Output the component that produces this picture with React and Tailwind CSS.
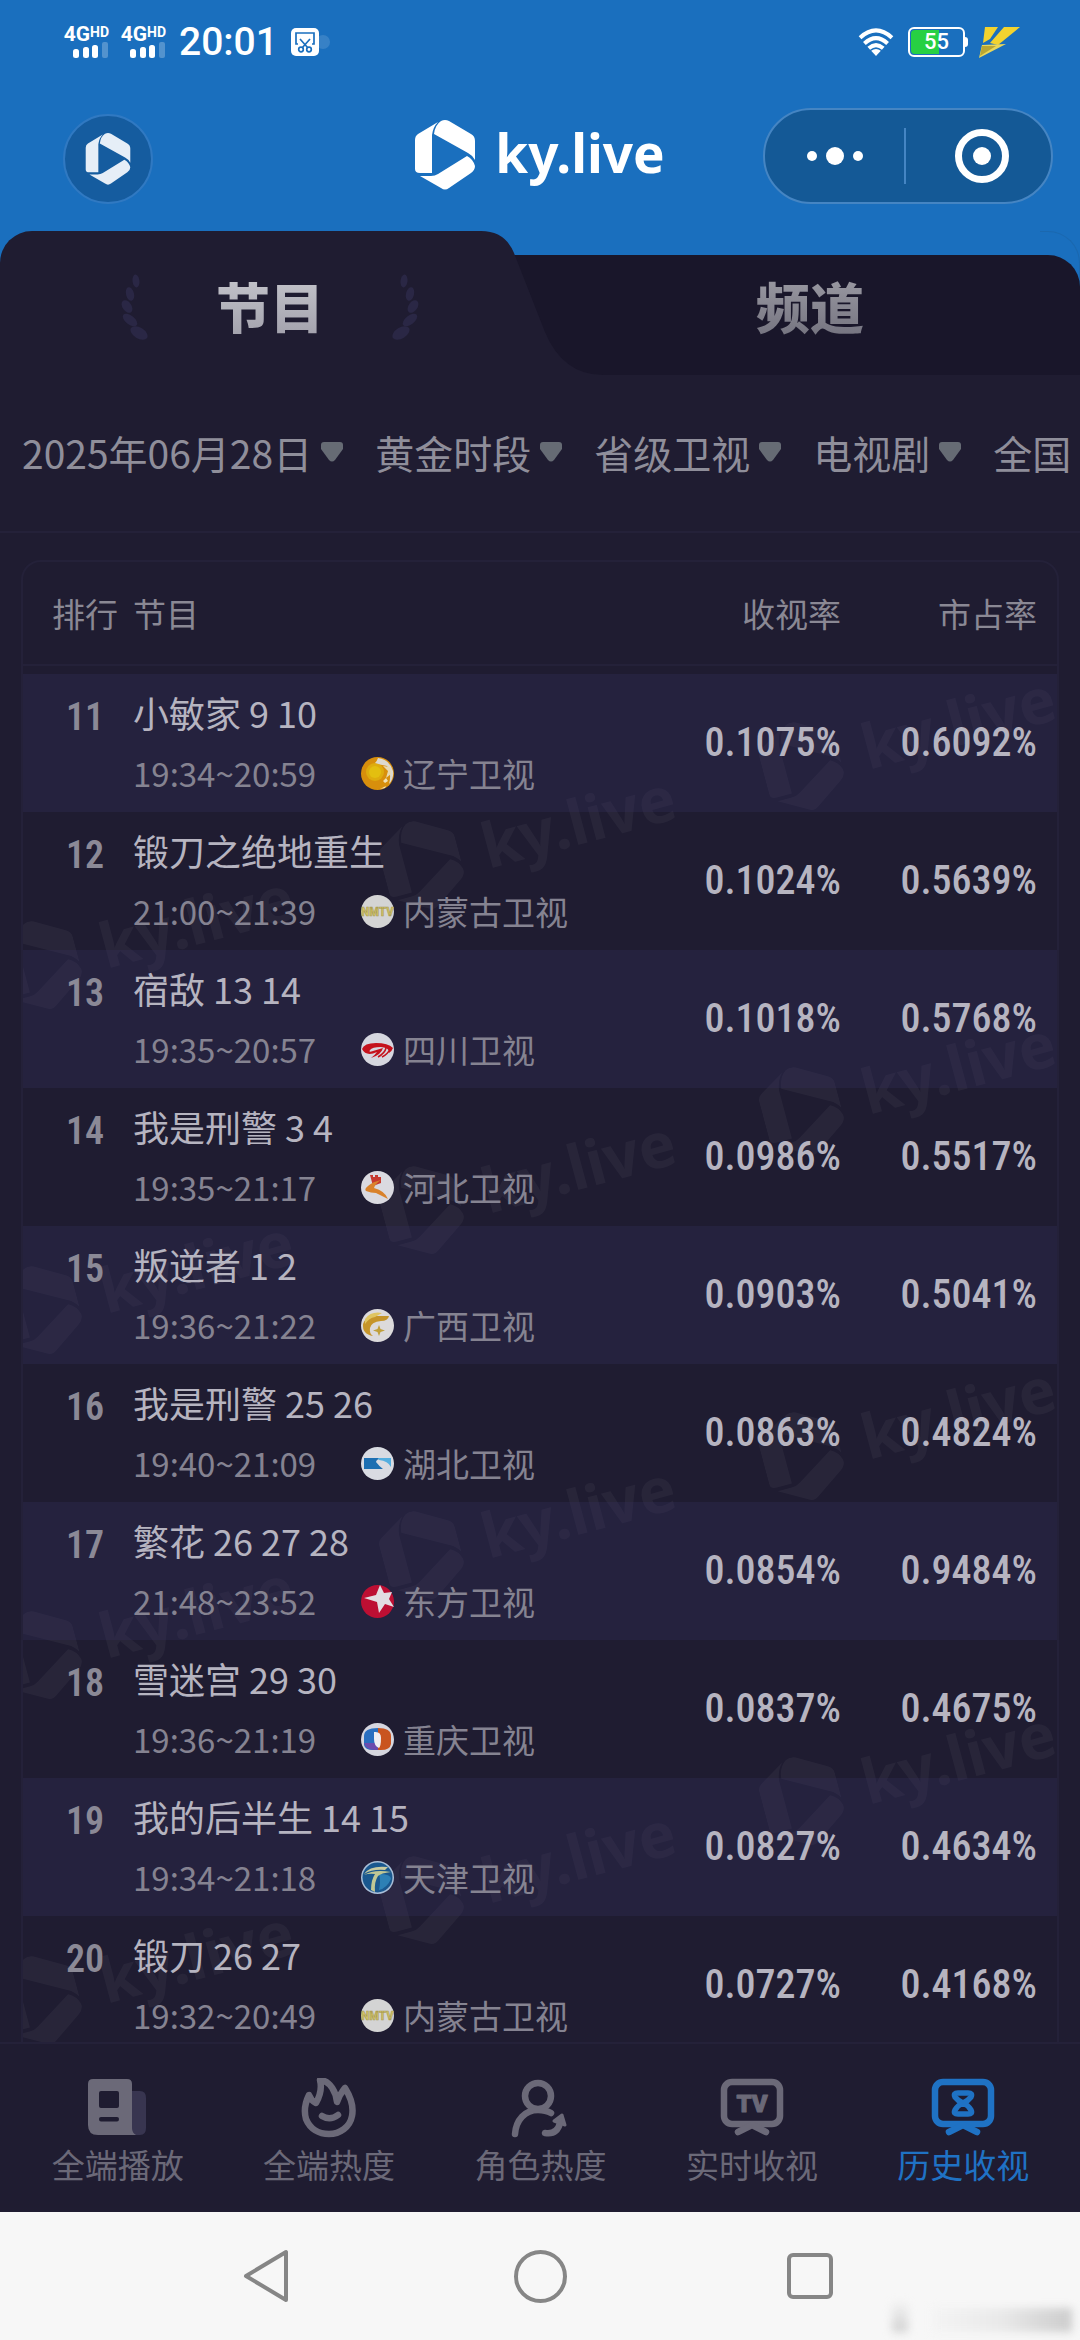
import React from "react";

const SANS = "font-['Noto_Sans_CJK_SC','Noto_Sans',sans-serif]";

const rows = [
  { rank: 11, title: "小敏家 9 10", time: "19:34~20:59", station: "辽宁卫视", logo: "liaoning", rating: "0.1075%", share: "0.6092%" },
  { rank: 12, title: "锻刀之绝地重生", time: "21:00~21:39", station: "内蒙古卫视", logo: "neimenggu", rating: "0.1024%", share: "0.5639%" },
  { rank: 13, title: "宿敌 13 14", time: "19:35~20:57", station: "四川卫视", logo: "sichuan", rating: "0.1018%", share: "0.5768%" },
  { rank: 14, title: "我是刑警 3 4", time: "19:35~21:17", station: "河北卫视", logo: "hebei", rating: "0.0986%", share: "0.5517%" },
  { rank: 15, title: "叛逆者 1 2", time: "19:36~21:22", station: "广西卫视", logo: "guangxi", rating: "0.0903%", share: "0.5041%" },
  { rank: 16, title: "我是刑警 25 26", time: "19:40~21:09", station: "湖北卫视", logo: "hubei", rating: "0.0863%", share: "0.4824%" },
  { rank: 17, title: "繁花 26 27 28", time: "21:48~23:52", station: "东方卫视", logo: "dongfang", rating: "0.0854%", share: "0.9484%" },
  { rank: 18, title: "雪迷宫 29 30", time: "19:36~21:19", station: "重庆卫视", logo: "chongqing", rating: "0.0837%", share: "0.4675%" },
  { rank: 19, title: "我的后半生 14 15", time: "19:34~21:18", station: "天津卫视", logo: "tianjin", rating: "0.0827%", share: "0.4634%" },
  { rank: 20, title: "锻刀 26 27", time: "19:32~20:49", station: "内蒙古卫视", logo: "neimenggu", rating: "0.0727%", share: "0.4168%" },
];

const filters = ["2025年06月28日", "黄金时段", "省级卫视", "电视剧", "全国"];

function BrandMark({ className }) {
  return (
    <svg viewBox="0 0 60 70" className={className} fill="currentColor" aria-hidden="true">
      <path d="M0 20Q0 16 3 14L23 2Q18 7 17 15V53H5Q0 53 0 49Z" />
      <path d="M26 1Q30 -1 34 1L56 14Q60 16 60 21V40Q57 35 53 33L19 14Q20 5 26 1Z" />
      <path d="M52 36Q58 39 60 46Q60 50 56 53L34 68Q30 71 26 68L5 56H16Q20 56 23 54Z" />
    </svg>
  );
}

function Signal() {
  return (
    <div className="flex w-12 flex-col items-end font-['Roboto',sans-serif] font-bold">
      <div className="flex items-start leading-4">
        <span className="text-[21px] leading-4">4G</span>
        <span className="text-[14px] leading-3">HD</span>
      </div>
      <svg viewBox="0 0 36 16" className="h-4 w-9" fill="currentColor" aria-hidden="true">
        <rect x="0" y="7" width="6" height="9" rx="2.5" />
        <rect x="10" y="5" width="6" height="11" rx="2.5" />
        <rect x="19" y="3" width="6" height="13" rx="2.5" />
        <rect x="29" y="0" width="6" height="16" rx="2" opacity=".25" />
      </svg>
    </div>
  );
}

function StatusBar() {
  return (
    <div className="flex h-21 items-center justify-between pr-[60px] pl-[61px] text-white">
      <div className="flex items-center gap-[9px]">
        <Signal />
        <Signal />
        <span className="pl-1 font-['Roboto',sans-serif] text-[39px] leading-8 font-medium">20:01</span>
        <svg viewBox="0 0 40 28" className="ml-1 h-7 w-10" aria-hidden="true">
          <circle cx="32" cy="14" r="7" fill="#fff" opacity=".13" />
          <rect width="28" height="28" rx="5" fill="#fff" />
          <g fill="none" stroke="#1a6fbe" strokeWidth="1.7">
            <path d="M7 16H5V5H23V16H21" />
            <path d="M9 11L17 20M19 11L11 20" />
            <circle cx="10" cy="21.500" r="2.300" />
            <circle cx="18" cy="21.500" r="2.300" />
          </g>
        </svg>
      </div>
      <div className="flex items-center gap-3.5">
        <svg viewBox="0 0 36 29" className="h-7 w-9" fill="none" stroke="#fff" strokeWidth="4.200" aria-hidden="true">
          <path d="M1.500 10Q18 -5 34.500 10" />
          <path d="M6 16Q18 5 30 16" />
          <path d="M10.500 21Q18 14.500 25.500 21" />
          <path d="M18 29L13 23.500Q18 20 23 23.500Z" fill="#fff" stroke="none" />
        </svg>
        <div className="flex items-center">
          <div className="relative flex h-[30px] w-[57px] items-center justify-center rounded-md border-2 border-white p-0.5">
            <div className="absolute inset-y-px left-px w-7 rounded-l bg-[#27d043]" />
            <span className="relative font-['Roboto',sans-serif] text-[22px] leading-6 font-medium">55</span>
          </div>
          <div className="h-2.5 w-[3px] rounded-r bg-white" />
        </div>
        <svg viewBox="0 0 42 32" className="-ml-1 h-8 w-[42px]" aria-hidden="true">
          <path d="M7 1H20L12 13L5 17Z" fill="#f3d32f" />
          <path d="M26 1H42L20 19L12 17Z" fill="#f3d32f" />
          <path d="M4 19L28 18L1 32Z" fill="#e9d75a" />
          <path d="M4 20L18 20L2 30Z" fill="#b9a633" />
        </svg>
      </div>
    </div>
  );
}

function AppHeader() {
  return (
    <header className="relative mt-6 mb-[27px] flex h-24 items-end justify-between pr-[27px] pl-[63px]">
      <button type="button" aria-label="首页" className="flex size-[90px] items-center justify-center rounded-full border-2 border-[#3079c2] bg-[#155c9f] text-[#e6eef7]">
        <BrandMark className="h-[52px] w-[46px]" />
      </button>
      <h1 className="absolute inset-x-0 top-3 flex items-center justify-center gap-5 text-white">
        <BrandMark className="h-[70px] w-[60px]" />
        <span className="pb-1 font-['Noto_Sans',sans-serif] text-[53px] leading-[60px] font-bold">ky.live</span>
      </h1>
      <div className="relative flex h-24 w-[290px] items-center rounded-full border-2 border-[#4585c3] bg-[#145996] text-white">
        <button type="button" aria-label="更多" className="flex h-full flex-1 items-center justify-center gap-[9px]">
          <i className="size-2.5 rounded-full bg-white" />
          <i className="size-[18px] rounded-full bg-white" />
          <i className="size-2.5 rounded-full bg-white" />
        </button>
        <span className="h-14 w-0.5 bg-[#4585c3]" />
        <button type="button" aria-label="关闭" className="flex h-full flex-1 items-center justify-center pl-1.5">
          <span className="flex size-[54px] items-center justify-center rounded-full border-7 border-white">
            <i className="size-[18px] rounded-full bg-white" />
          </span>
        </button>
      </div>
    </header>
  );
}

function Laurel({ className }) {
  return (
    <svg viewBox="0 0 30 70" className={className} fill="#2a2745" aria-hidden="true">
      <ellipse cx="17" cy="10" rx="3.500" ry="6.500" transform="rotate(-6 17 10)" />
      <ellipse cx="11" cy="23" rx="4" ry="7" transform="rotate(-14 11 23)" />
      <ellipse cx="8" cy="35.500" rx="4.500" ry="7" transform="rotate(-35 8 35.500)" />
      <ellipse cx="11" cy="49" rx="4.500" ry="8.500" transform="rotate(-52 11 49)" />
      <ellipse cx="20" cy="62" rx="5.500" ry="9.500" transform="rotate(-58 20 62)" />
    </svg>
  );
}

function Tabs() {
  return (
    <div role="tablist" className="relative grid h-36 grid-cols-2">
      <div className="absolute inset-x-0 top-0 bottom-0 overflow-hidden">
        <div className="ml-auto h-full w-10 rounded-tr-[32px] border-t border-r border-[#1b68af]" />
      </div>
      <div className="absolute inset-x-0 top-6 bottom-0 ml-[45%] rounded-tr-[32px] bg-[#19162a]" />
      <button type="button" role="tab" aria-selected="true" className="relative flex items-center justify-center pt-1.5">
        <span className="absolute inset-y-0 right-[60px] left-0 rounded-tl-[32px] bg-[#1f1c31]" />
        <svg viewBox="0 0 130 144" className="absolute top-0 left-full -ml-[61px] h-36 w-[130px]" aria-hidden="true">
          <path d="M0 0H2Q26 0 35 22L66 101Q84 144 124 144H0Z" fill="#1f1c31" />
        </svg>
        <span className="relative flex items-center gap-[67px]">
          <Laurel className="h-[70px] w-[30px]" />
          <span className="bg-linear-to-b from-[#c4c4cb] to-[#a3a2ad] bg-clip-text text-[54px] leading-[60px] font-black text-transparent">节目</span>
          <Laurel className="h-[70px] w-[30px] -scale-x-100" />
        </span>
      </button>
      <button type="button" role="tab" aria-selected="false" className="relative flex items-center justify-center pt-1.5">
        <span className="bg-linear-to-b from-[#9b9aa3] to-[#757480] bg-clip-text text-[54px] leading-[60px] font-black text-transparent">频道</span>
      </button>
    </div>
  );
}

function Filters() {
  return (
    <div className="flex h-[158px] items-center gap-8 overflow-hidden border-b-2 border-[#242139] pb-0.5 pl-[22px] text-[39px] leading-[60px] whitespace-nowrap text-[#8f8e9a]">
      {filters.map((label, i) => (
        <button key={label} type="button" className="flex shrink-0 items-center gap-[9px]">
          <span>{label}</span>
          {i < filters.length - 1 && (
            <svg viewBox="0 0 22 20" className="h-5 w-[22px]" aria-hidden="true">
              <path d="M3 0H19Q22 0 22 3V7L14 18Q11 21 8 18L0 7V3Q0 0 3 0Z" fill="#666b74" />
            </svg>
          )}
        </button>
      ))}
    </div>
  );
}

const logoArt = {
  liaoning: (
    <>
      <circle cx="16.500" cy="16.500" r="16.500" fill="#d88f0c" />
      <circle cx="14" cy="15" r="9" fill="#deac0e" />
      <circle cx="14" cy="15" r="6" fill="#e3bf10" />
      <path d="M17 1Q29 3 32 14Q33 22 28 27Q31 16 26 9Q20 8 14 6Q16 4 17 1Z" fill="#ddd9cf" />
      <path d="M29 10L22 9L27 14L25 21L30 17Z" fill="#e8d9b0" />
      <path d="M25 21L27 24L24 26L22 24ZM19 32L25 29L24 31Z" fill="#f3e3b4" />
    </>
  ),
  neimenggu: (
    <>
      <circle cx="16.500" cy="16.500" r="16.500" fill="#d4d4d4" />
      <text x="16.500" y="21" textAnchor="middle" fontSize="13" fontWeight="700" fontFamily="Roboto Condensed, Roboto, sans-serif" fill="#d3c467" stroke="#a89b52" strokeWidth=".6">NMTV</text>
    </>
  ),
  sichuan: (
    <>
      <circle cx="16.500" cy="16.500" r="16.500" fill="#d6d7df" />
      <path d="M1 16Q3 10 15 10Q27 10 32 15Q31 18 28 20Q29 15 20 14Q11 14 9 17Q7 20 12 18L22 15Q20 22 10 25Q14 22 16 19Q5 24 1 16Z" fill="#c5121c" />
      <path d="M25 15Q24 20 17 24M29 16Q27 21 21 24" fill="none" stroke="#c5121c" strokeWidth="1.500" />
    </>
  ),
  hebei: (
    <>
      <circle cx="16.500" cy="16.500" r="16.500" fill="#dadae0" />
      <path d="M9 4H12V6H14V4H17V6H20V4V12L12 15Z" fill="#c6392f" />
      <path d="M20 9Q11 11 7 15Q3 18 5 20Q10 22 15 22L27 28Q24 20 13 17Q14 13 20 9Z" fill="#d9822b" />
    </>
  ),
  guangxi: (
    <>
      <circle cx="16.500" cy="16.500" r="16.500" fill="#dcdadb" />
      <path d="M28 7Q27 12 20 12Q10 13 9 19Q8 24 12 27Q1 25 2 15Q5 7 15 7Z" fill="#c6952a" />
      <path d="M4 10Q10 2 21 4L14 8Q8 9 4 15Z" fill="#e0c560" />
      <path d="M18 16L19.500 20L24 21.500L19.500 23L18 27L16.500 23L12 21.500L16.500 20Z" fill="#c1a03a" />
    </>
  ),
  hubei: (
    <>
      <circle cx="16.500" cy="16.500" r="16.500" fill="#d9dbe2" />
      <path d="M3 11H22Q15 12 15 15Q18 19 22 22H3Z" fill="#1d6fb2" />
      <path d="M17 11H30V20Q27 14 18 13Z" fill="#54aee0" />
    </>
  ),
  dongfang: (
    <>
      <circle cx="16.500" cy="16.500" r="16.500" fill="#bd0f33" />
      <path d="M19 0L23 8L31 7L28 14L33 22L24 19L18 28L16 17L3 13L15 10Z" fill="#e2dde2" />
    </>
  ),
  chongqing: (
    <>
      <circle cx="16.500" cy="16.500" r="16.500" fill="#d6d6df" />
      <path d="M17 5Q3 5 3 13V22Q4 27 12 27H17Z" fill="#2a6fc0" />
      <path d="M3 20Q5 27 14 27H17V20Z" fill="#6b4cae" />
      <path d="M17 5Q30 5 30 13V21Q29 27 20 27H17Z" fill="#c9541f" />
      <path d="M13 9Q20 8 20 15Q20 23 18 25Q13 23 13 16Z" fill="#f0eef2" />
    </>
  ),
  tianjin: (
    <>
      <circle cx="16.500" cy="16.500" r="16.500" fill="#a9bfd8" />
      <circle cx="16.500" cy="16.500" r="15" fill="#1a588f" />
      <path d="M3 13Q9 4 27 6L24 9Q11 8 3 13Z" fill="#c9cba0" />
      <path d="M18 13Q30 13 30 18Q26 27 18 29Q20 20 18 13Z" fill="#2d80b5" />
      <path d="M3 14Q13 8 30 11Q20 12 17 15Q13 21 14 31L10 29Q10 19 14 13Q8 12 3 14Z" fill="#c0c795" />
    </>
  ),
};

function StationLogo({ name }) {
  return (
    <svg viewBox="0 0 33 33" className="size-[33px] shrink-0" aria-hidden="true">
      {logoArt[name]}
    </svg>
  );
}

function Watermark({ className }) {
  return (
    <div className={`absolute flex origin-[39px_45px] -rotate-15 items-center gap-6 ${className}`}>
      <BrandMark className="h-[91px] w-[78px]" />
      <span className="pb-2 font-['Noto_Sans',sans-serif] text-[62px] leading-[62px] font-bold">ky.live</span>
    </div>
  );
}

function Watermarks() {
  return (
    <div className="pointer-events-none absolute inset-x-0 top-[111px] bottom-0 overflow-hidden text-white opacity-4" aria-hidden="true">
      <Watermark className="top-[48px] left-[740px]" />
      <Watermark className="top-[147px] left-[360px]" />
      <Watermark className="top-[247px] left-[-22px]" />
      <Watermark className="top-[393px] left-[740px]" />
      <Watermark className="top-[492px] left-[360px]" />
      <Watermark className="top-[592px] left-[-22px]" />
      <Watermark className="top-[738px] left-[740px]" />
      <Watermark className="top-[837px] left-[360px]" />
      <Watermark className="top-[937px] left-[-22px]" />
      <Watermark className="top-[1083px] left-[740px]" />
      <Watermark className="top-[1182px] left-[360px]" />
      <Watermark className="top-[1282px] left-[-22px]" />
    </div>
  );
}

function Ranking() {
  return (
    <main className="min-h-0 flex-1 overflow-hidden px-[21px] pt-[27px]">
      <div className="relative rounded-t-[20px] border-2 border-[#242139]">
        <Watermarks />
        <table className="relative w-full table-fixed">
          <thead className="text-[33px] leading-[48px] text-[#8a8894]">
            <tr className="h-[103px] border-b-2 border-[#242139]">
              <th className="w-[110px] pl-[29px] text-left font-normal whitespace-nowrap">排行</th>
              <th className="text-left font-normal">节目</th>
              <th className="w-[200px] text-right font-normal">收视率</th>
              <th className="w-[216px] pr-5 text-right font-normal">市占率</th>
            </tr>
          </thead>
          <tbody className="before:block before:h-2 before:content-['']">
            {rows.map((r) => (
              <tr key={r.rank} className="h-[138px] even:bg-transparent odd:bg-[#383368]/25">
                <td className="pt-3 pl-[43px] align-top font-['Roboto_Condensed','Roboto',sans-serif] text-[38px] leading-[62px] font-semibold text-[#8b8996]">{r.rank}</td>
                <td className="pt-2 pb-2 whitespace-nowrap">
                  <div className="text-[36px] leading-[60px] text-[#b6b4c0]">{r.title}</div>
                  <div className="flex items-center text-[33px] leading-[62px] text-[#858391]">
                    <span className="w-[228px]">{r.time}</span>
                    <StationLogo name={r.logo} />
                    <span className="pl-[9px]">{r.station}</span>
                  </div>
                </td>
                <td className="text-right font-['Roboto_Condensed','Roboto',sans-serif] text-[40px] font-medium text-[#b6b4c0]">{r.rating}</td>
                <td className="pr-5 text-right font-['Roboto_Condensed','Roboto',sans-serif] text-[40px] font-medium text-[#b6b4c0]">{r.share}</td>
              </tr>
            ))}
          </tbody>
        </table>
      </div>
    </main>
  );
}

const iconCls = "h-[60px] w-16";

const tabs = [
  {
    label: "全端播放",
    icon: (
      <svg viewBox="0 0 64 60" className={iconCls} aria-hidden="true">
        <path d="M40 13H54Q60 13 60 20V50Q60 57 54 57H46Z" fill="#383550" />
        <path fillRule="evenodd" d="M7 1H41Q46 1 46 6V50Q46 55 50 57H12Q2 57 2 47V6Q2 1 7 1ZM15 13Q13 13 13 15V28Q13 30 15 30H31Q33 30 33 28V15Q33 13 31 13ZM15 39Q13 39 13 41Q13 43.500 15 43.500H31Q33 43.500 33 41Q33 39 31 39Z" fill="currentColor" />
      </svg>
    ),
  },
  {
    label: "全端热度",
    icon: (
      <svg viewBox="0 0 64 60" className={iconCls} fill="none" stroke="currentColor" strokeWidth="6.500" strokeLinecap="round" strokeLinejoin="round" aria-hidden="true">
        <path d="M12 17C8 25 7 34 9 41C13 51 22 56 32 56C43 56 53 49 55 38C57 28 53 18 48 10C45 14 42 17 40 24C39 15 34 3 23 2C25 10 23 18 19 25C15 23 13 20 12 17Z" />
        <path d="M25 38Q33 43 41 37" />
      </svg>
    ),
  },
  {
    label: "角色热度",
    icon: (
      <svg viewBox="0 0 64 60" className={iconCls} fill="none" stroke="currentColor" strokeWidth="6.500" strokeLinecap="round" strokeLinejoin="round" aria-hidden="true">
        <circle cx="30" cy="18" r="13" />
        <path d="M7 56C8 42 17 32 30 32Q38 32 43 35" />
        <path d="M37 55Q49 57 52 45" />
        <path d="M46 43L54 37L57 47Z" fill="currentColor" strokeWidth="3" />
      </svg>
    ),
  },
  {
    label: "实时收视",
    icon: (
      <svg viewBox="0 0 64 60" className={iconCls} fill="none" stroke="currentColor" strokeWidth="6.500" strokeLinecap="round" strokeLinejoin="round" aria-hidden="true">
        <rect x="4" y="4" width="56" height="42" rx="8" />
        <path d="M18 54L32 47L46 54" />
        <text x="32" y="34" textAnchor="middle" fontSize="24" fontWeight="900" fontFamily="Roboto, sans-serif" fill="currentColor" stroke="currentColor" strokeWidth="1">TV</text>
      </svg>
    ),
  },
  {
    label: "历史收视",
    active: true,
    icon: (
      <svg viewBox="0 0 64 60" className={iconCls} fill="none" stroke="currentColor" strokeWidth="6.500" strokeLinecap="round" strokeLinejoin="round" aria-hidden="true">
        <rect x="4" y="4" width="56" height="42" rx="8" />
        <path d="M18 54L32 47L46 54" />
        <path d="M27 15H37Q42 15 40 19Q37 23 32 25Q27 23 24 19Q22 15 27 15ZM27 36H37Q42 36 40 32Q37 27 32 25Q27 27 24 32Q22 36 27 36Z" strokeWidth="5.500" />
      </svg>
    ),
  },
];

function TabBar() {
  return (
    <nav className="grid h-[170px] shrink-0 grid-cols-5 border-t-2 border-[#242139] bg-[#1f1c31] pt-[34px] pr-[11px] pl-3">
      {tabs.map((t) => (
        <a key={t.label} href="#" aria-current={t.active ? "page" : undefined} className={t.active ? "flex flex-col items-center text-[#1f72c4]" : "flex flex-col items-center text-[#6b6978]"}>
          {t.icon}
          <span className="pt-0.5 text-[33px] leading-[48px]">{t.label}</span>
        </a>
      ))}
    </nav>
  );
}

function SystemNav() {
  return (
    <div className="relative grid h-32 shrink-0 grid-cols-3 items-center bg-[#f7f7f7] px-[12.5%] text-[#868686]">
      <button type="button" aria-label="返回" className="flex justify-center">
        <svg viewBox="0 0 54 54" className="size-[54px]" fill="none" stroke="currentColor" strokeWidth="4" strokeLinejoin="round" aria-hidden="true">
          <path d="M3 27L43 3V51Z" />
        </svg>
      </button>
      <button type="button" aria-label="主页" className="flex justify-center">
        <span className="size-[53px] rounded-full border-4 border-current" />
      </button>
      <button type="button" aria-label="最近任务" className="flex justify-center">
        <span className="size-[46px] rounded-md border-4 border-current" />
      </button>
      <div className="absolute right-2 bottom-2 flex h-8 w-[180px] items-end gap-6 blur-xs" aria-hidden="true">
        <i className="h-8 w-4 bg-linear-to-b from-transparent to-[#cfcfcf]" />
        <i className="h-6 flex-1 bg-linear-to-r from-[#f4f4f4] via-[#e9e9e9] to-[#cccccc]" />
      </div>
    </div>
  );
}

export default function App() {
  return (
    <div className={`flex h-screen flex-col overflow-hidden bg-[#1a6fbe] ${SANS}`}>
      <StatusBar />
      <AppHeader />
      <div className="shrink-0">
        <Tabs />
      </div>
      <div className="flex min-h-0 flex-1 flex-col bg-[#1f1c31]">
        <Filters />
        <Ranking />
        <TabBar />
      </div>
      <SystemNav />
    </div>
  );
}
